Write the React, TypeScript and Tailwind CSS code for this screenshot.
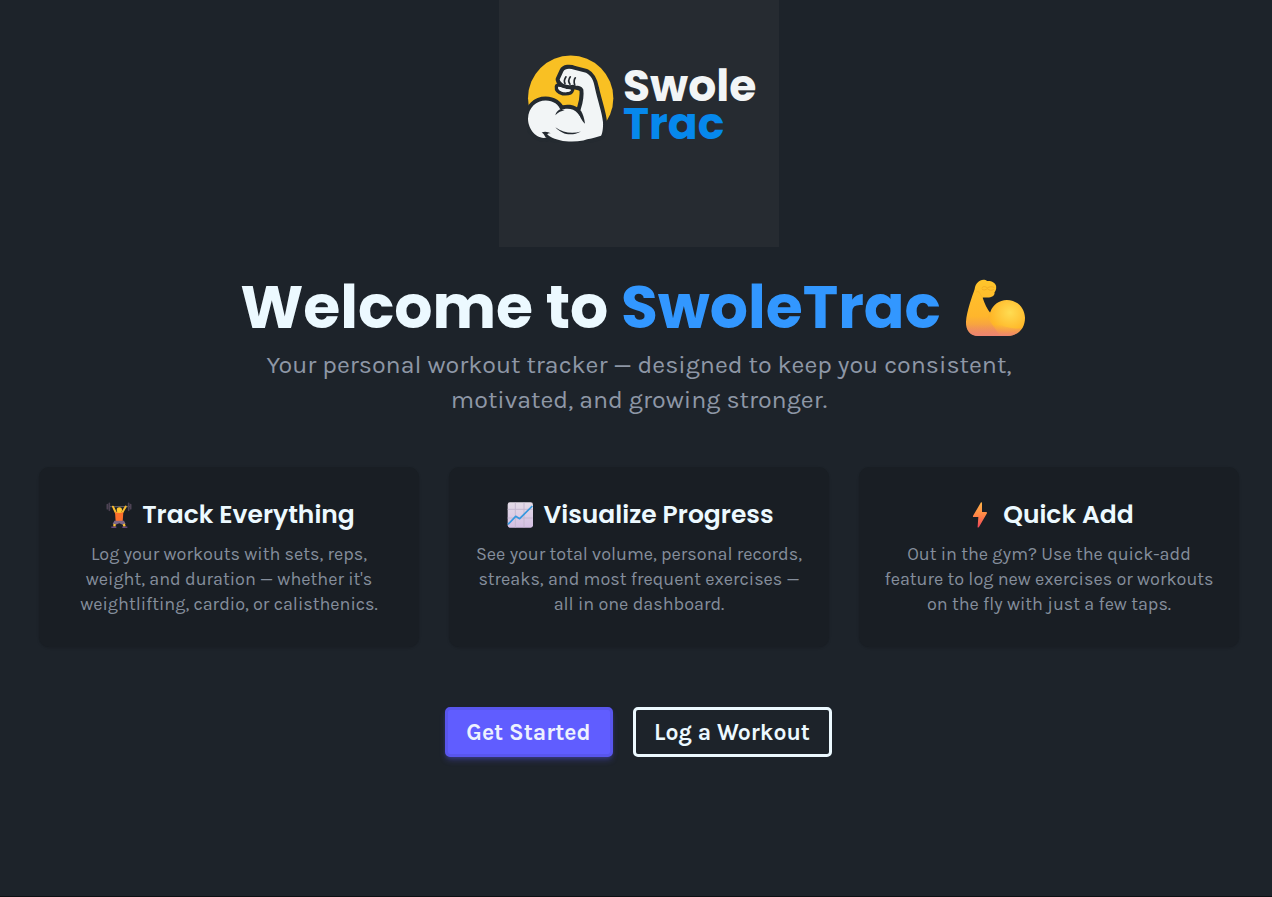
import React from "react";

const display = "font-['Poppins','Inter',sans-serif]";

function LogoMark() {
  return (
    <svg viewBox="36 28 264 266" className="h-[89px] w-[88px] shrink-0" aria-hidden="true">
      <circle cx="167" cy="160" r="128" fill="#f9c023" />
      <g stroke="#242a30" strokeWidth="24" strokeLinejoin="round" fill="#f2f5f6" style={{ paintOrder: "stroke" }}>
        <path d="M129 126C140 126 153 129 168 134C166 141 157 143 145 142C134 139 128 134 129 126Z" strokeWidth="20" />
        <path d="M96 278C62 286 39 250 39 222C40 187 65 167 92 167C115 167 132 180 137 197C152 188 176 190 188 205L203 225C195 212 195 203 197 194C205 170 207 150 205 134C198 120 188 126 174 120C157 124 137 117 134 104L145 80C149 71 164 69 178 75L213 84C230 93 236 108 240 130C247 164 262 205 264 232C265 250 262 266 258 273C237 281 220 282 205 287C170 294 130 290 105 275L87 262C91 269 98 274 96 278Z" />
      </g>
      <path d="M130 129C142 129 153 133 168 136C164 142 152 143 144 141C135 139 129 135 130 129Z" fill="#f2f5f6" />
      <g fill="none" stroke="#242a30" strokeLinecap="round">
        <path d="M150 116Q145 108 153 96M165 118Q157 108 166 96M179 120Q175 107 181 99" strokeWidth="5" />
      </g>
      <g fill="#242a30">
        <path d="M134 194C128 197 123 203 121 211C130 202 139 198 149 197Z" />
        <path d="M187 196C193 205 195 222 210 237C208 220 204 209 198 198Z" />
        <path d="M121 247C145 265 173 267 198 260C170 275 142 270 121 247Z" />
        <path d="M80 263C89 258 101 261 107 266C98 264 94 268 97 280C88 278 90 268 80 263Z" />
      </g>
    </svg>
  );
}

function Biceps() {
  return (
    <svg viewBox="44 26 184 176" className="h-[59px] w-[61px]" role="img" aria-label="Flexed biceps">
      <defs>
        <linearGradient id="arm" x1="0" y1="0" x2="0" y2="1">
          <stop offset="0" stopColor="#ffc52b" />
          <stop offset=".65" stopColor="#ffb62c" />
          <stop offset="1" stopColor="#ec8a5d" />
        </linearGradient>
        <radialGradient id="muscle" cx=".6" cy=".35" r=".75">
          <stop offset="0" stopColor="#ffdc52" />
          <stop offset=".7" stopColor="#ffb728" />
          <stop offset="1" stopColor="#f6a53c" />
        </radialGradient>
        <linearGradient id="base" x1="0" y1="0" x2="0" y2="1">
          <stop offset=".4" stopColor="#ef8a68" stopOpacity="0" />
          <stop offset="1" stopColor="#ee8470" />
        </linearGradient>
      </defs>
      <path d="M83 38C90 29 104 28 111 34C123 33 137 39 138 51C139 61 135 66 133 68C135 79 124 84 112 84L97 84C103 103 111 120 121 131L170 200L85 200C59 200 46 183 47 157C49 126 65 82 73 59C74 49 78 42 83 38Z" fill="url(#arm)" />
      <path d="M121 126C128 105 147 92 170 91C202 91 224 115 225 145C225 178 204 200 171 200L150 200L112 145Z" fill="url(#muscle)" />
      <path d="M48 148C62 164 75 165 95 158L112 142L160 170C184 178 205 180 216 174C207 192 191 200 170 200L85 200C58 200 45 180 48 148Z" fill="url(#base)" />
      <path d="M95 55C98 49 106 50 111 55C118 51 125 50 131 53M96 59C101 63 107 61 111 57C118 63 124 64 130 60" fill="none" stroke="#f2ac24" strokeWidth="3" strokeLinecap="round" />
      <path d="M78 67C88 62 90 77 97 84" fill="none" stroke="#f8b428" strokeWidth="3" />
    </svg>
  );
}

function Lifter() {
  return (
    <svg viewBox="9 19 78 78" className="size-[26px]" role="img" aria-label="Weight lifter">
      <path d="M20 33H82" stroke="#77707d" strokeWidth="2.5" />
      <path d="M13 27V39M19 23V44M77 23V44M83 27V39" stroke="#4d4354" strokeWidth="5" strokeLinecap="round" />
      <path d="M30 33L39 52H57L68 33" fill="none" stroke="#f9bd2f" strokeWidth="6" strokeLinecap="round" strokeLinejoin="round" />
      <circle cx="49" cy="43" r="8" fill="#ffc72f" />
      <path d="M36 49Q49 55 61 49L59 79H38Z" fill="#fb702c" />
      <path d="M34 75H63L68 85L59 87L49 83L38 87L29 85Z" fill="#7c6787" />
      <path d="M35 85L34 93M62 85L65 93" stroke="#fac137" strokeWidth="7" />
      <path d="M25 95H40M58 95H73" stroke="#66477b" strokeWidth="5" />
    </svg>
  );
}

function Chart() {
  return (
    <svg viewBox="0 0 78 78" className="size-[26px]" role="img" aria-label="Rising chart">
      <defs>
        <linearGradient id="paper" x1="0" y1="0" x2="0" y2="1">
          <stop stopColor="#e4dce7" />
          <stop offset="1" stopColor="#d4bfe3" />
        </linearGradient>
      </defs>
      <rect x="2" y="1" width="76" height="76" rx="7" fill="url(#paper)" />
      <path d="M2 22H77M2 48H77M25 2V76M51 2V76" stroke="#c5b8d0" strokeWidth="3" />
      <path d="M3 67L26 43L38 50L76 12" fill="none" stroke="#3498df" strokeWidth="5" strokeLinejoin="round" />
    </svg>
  );
}

function Bolt() {
  return (
    <svg viewBox="0 0 78 78" className="size-[26px]" role="img" aria-label="Lightning bolt">
      <defs>
        <linearGradient id="bolt" x1="0" y1="0" x2="0" y2="1">
          <stop stopColor="#ffb348" />
          <stop offset=".5" stopColor="#ff8746" />
          <stop offset="1" stopColor="#f1465b" />
        </linearGradient>
      </defs>
      <path d="M42 1Q45 0 45 4V30H57Q62 30 59 35L36 75Q31 79 32 73L34 45H20Q16 45 19 40Z" fill="url(#bolt)" />
    </svg>
  );
}

const features = [
  {
    icon: <Lifter />,
    title: "Track Everything",
    lines: ["Log your workouts with sets, reps,", "weight, and duration — whether it's", "weightlifting, cardio, or calisthenics."],
  },
  {
    icon: <Chart />,
    title: "Visualize Progress",
    lines: ["See your total volume, personal records,", "streaks, and most frequent exercises —", "all in one dashboard."],
  },
  {
    icon: <Bolt />,
    title: "Quick Add",
    lines: ["Out in the gym? Use the quick-add", "feature to log new exercises or workouts", "on the fly with just a few taps."],
  },
];

export default function App() {
  return (
    <main className="flex min-h-screen flex-col items-center border-b border-[#0d1013] bg-[#1d232a] pr-8 pl-[38px] font-['Karla','Inter',sans-serif] text-[#ecf9ff]">
      <div className="flex h-[247px] w-[280px] items-start gap-2 bg-[#262b31] pt-[54px] pl-7">
        <LogoMark />
        <div className={`${display} pt-[13px] text-[44px] leading-[38px] font-bold text-[#f2f5f6]`}>
          <div>Swole</div>
          <div className="text-[#0688ec]">Trac</div>
        </div>
      </div>

      <h1 className={`${display} mt-7 flex flex-wrap items-center justify-center gap-x-6 pr-3 text-center text-[60px] leading-[64px] font-bold`}>
        <span>
          Welcome to <span className="text-[#3297ff]">SwoleTrac</span>
        </span>
        <Biceps />
      </h1>
      <p className="mt-2 text-center text-[25px] leading-[35px] text-[#8e97a6]">
        Your personal workout tracker — designed to keep you consistent,
        <br />
        motivated, and growing stronger.
      </p>

      <section className="mt-[50px] grid w-full max-w-[1200px] gap-[30px] md:grid-cols-3">
        {features.map((f) => (
          <article key={f.title} className="rounded-[10px] bg-[#191e24] px-2 pt-[30px] pb-[30px] text-center shadow-sm shadow-black/10">
            <h2 className={`${display} flex items-center justify-center gap-[10px] pl-[3px] text-[25px] leading-[35px] font-semibold`}>
              {f.icon}
              <span>{f.title}</span>
            </h2>
            <p className="mt-[10px] text-[18px] leading-[25px] text-[#858e9c]">
              {f.lines.map((line) => (
                <span key={line} className="block">{line}</span>
              ))}
            </p>
          </article>
        ))}
      </section>

      <div className="mt-[60px] mb-10 flex flex-wrap justify-center gap-5 pr-[2px] text-[23px] font-bold">
        <button type="button" className="h-[50px] w-[168px] rounded-[5px] border-[3px] border-[#5956ed] bg-[#605dff] pt-[2px] text-[#edf1fe] shadow-md shadow-[#605dff]/30">
          Get Started
        </button>
        <button type="button" className="h-[50px] w-[199px] rounded-[5px] border-[3px] border-[#ecf9ff] pt-[2px]">
          Log a Workout
        </button>
      </div>
    </main>
  );
}
